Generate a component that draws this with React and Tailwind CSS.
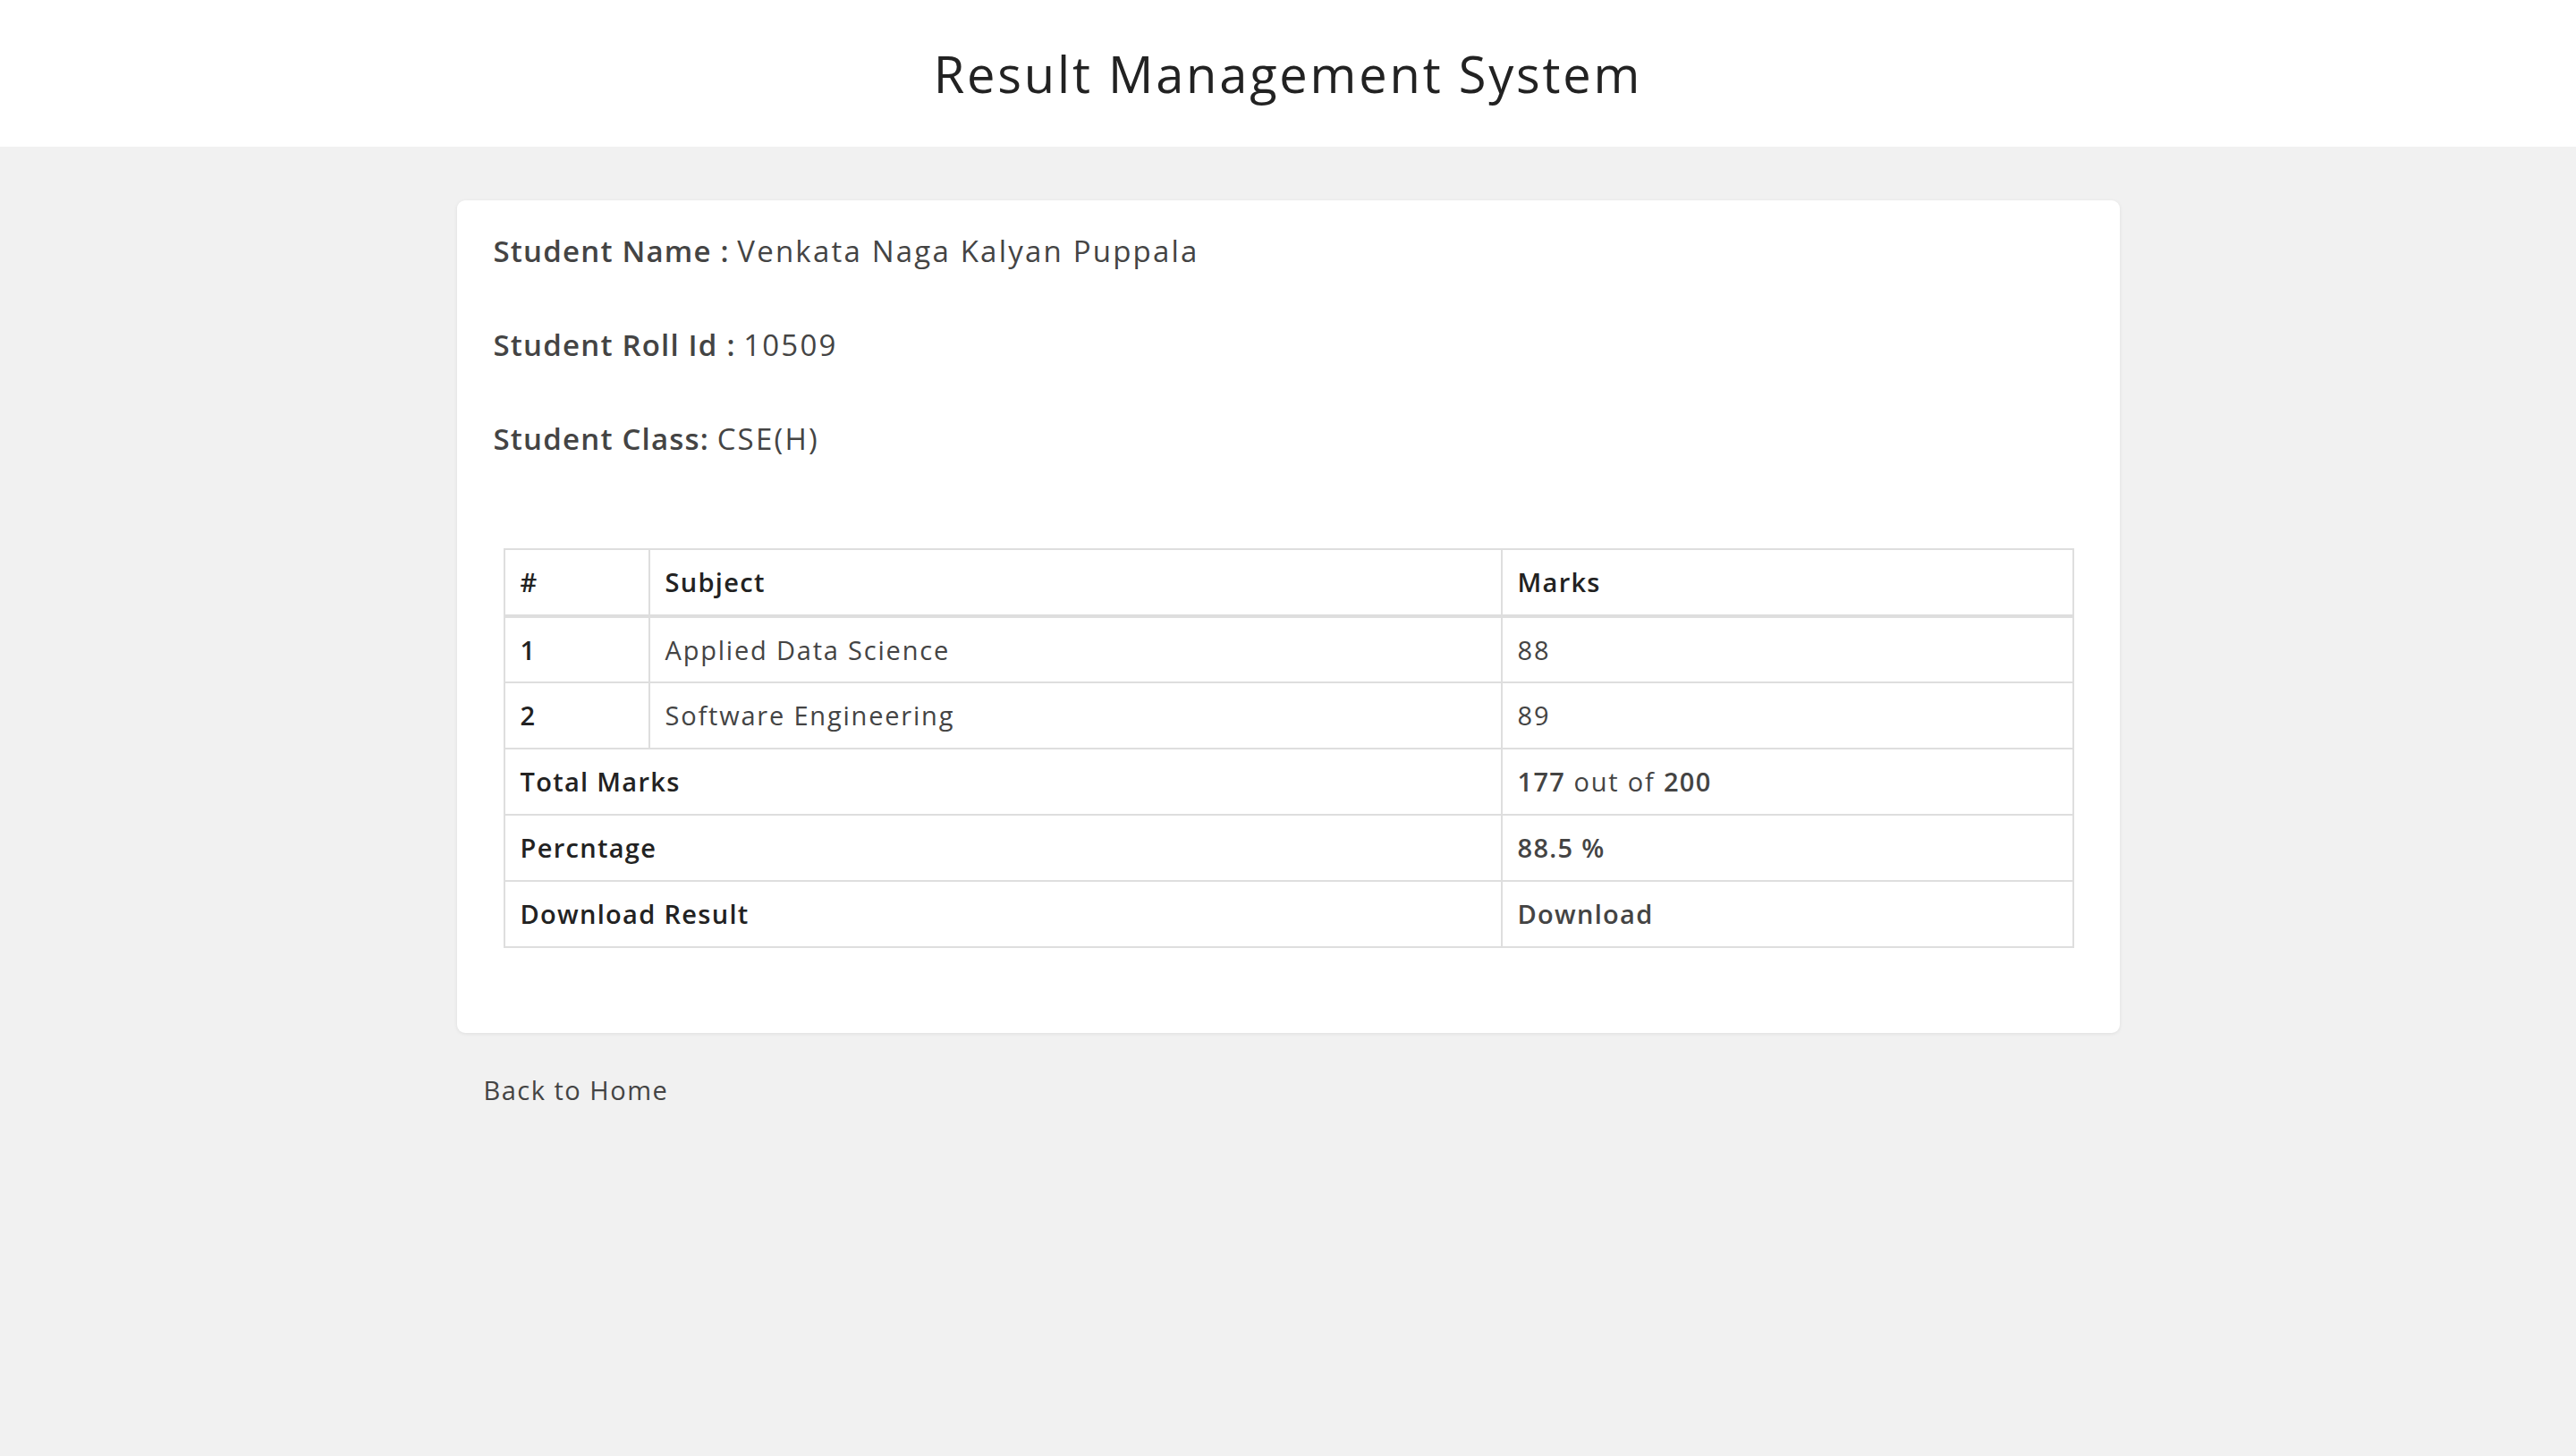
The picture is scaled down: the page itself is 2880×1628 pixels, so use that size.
import React from "react";

const subjects = [
  { id: 1, name: "Applied Data Science", marks: 88 },
  { id: 2, name: "Software Engineering", marks: 89 },
];

export default function App() {
  return (
    <div className="min-h-screen bg-[#f1f1f1] font-['Open_Sans',sans-serif] text-[#444]">
      {/* Header */}
      <header className="h-[164px] bg-white flex items-center justify-center">
        <h1 className="text-[56px] font-normal tracking-[2.8px] text-[#222]">Result Management System</h1>
      </header>

      <main className="w-[1859px] mx-auto pt-[60px]">
        {/* Result card */}
        <div className="bg-white rounded-[9px] shadow-[0_1px_4px_rgba(0,0,0,0.08)] pl-[41px] pr-[51px] pt-[33px] pb-[95px]">
          <div className="flex flex-col gap-[58px] text-[33px] leading-[47px]">
            <p>
              <span className="font-semibold tracking-[1.2px]">Student Name :</span>{" "}
              <span className="font-normal tracking-[2.2px]">Venkata Naga Kalyan Puppala</span>
            </p>
            <p>
              <span className="font-semibold tracking-[1.2px]">Student Roll Id :</span>{" "}
              <span className="font-normal tracking-[2.2px]">10509</span>
            </p>
            <p>
              <span className="font-semibold tracking-[1.2px]">Student Class:</span>{" "}
              <span className="font-normal tracking-[2.2px]">CSE(H)</span>
            </p>
          </div>

          <table className="mt-[99px] ml-[11px] w-[1756px] border-collapse border-2 border-[#dedede] text-[29px] tracking-[1.8px] text-[#444]">
            <thead>
              <tr className="h-[75px] border-b-4 border-[#dedede]">
                <th className="w-[162px] border-2 border-[#dedede] px-[17px] text-left font-semibold tracking-[1.3px] text-[#222]">#</th>
                <th className="w-[953px] border-2 border-[#dedede] px-[17px] text-left font-semibold tracking-[1.3px] text-[#222]">Subject</th>
                <th className="border-2 border-[#dedede] px-[17px] text-left font-semibold tracking-[1.3px] text-[#222]">Marks</th>
              </tr>
            </thead>
            <tbody>
              {subjects.map((s) => (
                <tr key={s.id} className="h-[74px]">
                  <th className="border-2 border-[#dedede] px-[17px] text-left font-semibold tracking-[1.3px] text-[#222]">{s.id}</th>
                  <td className="border-2 border-[#dedede] px-[17px] font-normal">{s.name}</td>
                  <td className="border-2 border-[#dedede] px-[17px] font-normal">{s.marks}</td>
                </tr>
              ))}
              <tr className="h-[74px]">
                <th colSpan={2} className="border-2 border-[#dedede] px-[17px] text-left font-semibold tracking-[1.3px] text-[#222]">Total Marks</th>
                <td className="border-2 border-[#dedede] px-[17px] font-normal">
                  <b className="font-semibold tracking-[1.3px]">177</b> out of <b className="font-semibold tracking-[1.3px]">200</b>
                </td>
              </tr>
              <tr className="h-[74px]">
                <th colSpan={2} className="border-2 border-[#dedede] px-[17px] text-left font-semibold tracking-[1.3px] text-[#222]">Percntage</th>
                <td className="border-2 border-[#dedede] px-[17px] font-semibold tracking-[1.3px]">88.5 %</td>
              </tr>
              <tr className="h-[74px]">
                <th colSpan={2} className="border-2 border-[#dedede] px-[17px] text-left font-semibold tracking-[1.3px] text-[#222]">Download Result</th>
                <td className="border-2 border-[#dedede] px-[17px] font-semibold tracking-[1.3px]">
                  <a href="#" className="text-[#444]">Download</a>
                </td>
              </tr>
            </tbody>
          </table>
        </div>

        <div className="pl-[30px] pt-[42px]">
          <a href="#" className="text-[29px] font-normal tracking-[1.5px] text-[#444]">Back to Home</a>
        </div>
      </main>
    </div>
  );
}
